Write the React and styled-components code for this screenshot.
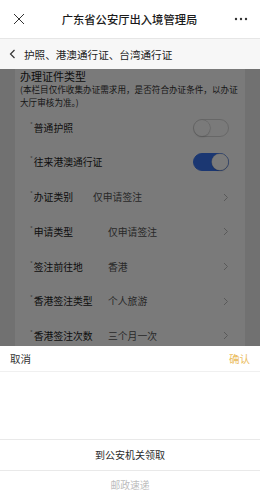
import React from 'react'
import styled, { createGlobalStyle } from 'styled-components'

const Global = createGlobalStyle`
  html, body { margin: 0; padding: 0; background: #fff; }
  body { font-family: "Noto Sans CJK SC", "Noto Sans", sans-serif; }
`

const Screen = styled.div`
  width: 260px;
  height: 500px;
  display: flex;
  flex-direction: column;
  overflow: hidden;
  background: #fff;
`

const TopBar = styled.div`
  height: 38px;
  flex: none;
  display: flex;
  align-items: center;
  justify-content: space-between;
  padding: 0 12px 0 13px;
  border-bottom: 1px solid #e6e6e6;
  background: #fff;
`

const Title = styled.div`
  font-size: 11.3px;
  font-weight: 500;
  color: #1a1a1a;
`

const NavBar = styled.div`
  height: 30px;
  flex: none;
  display: flex;
  align-items: center;
  gap: 8px;
  padding: 0 0 0 9px;
  background: #f7f7f7;
  font-size: 10.6px;
  color: #222;
`

const Body = styled.div`
  position: relative;
  flex: 1;
  overflow: hidden;
  background: #ececec;
`

const Section = styled.div`
  margin: 0 15px;
  background: #fff;
  padding: 0 0 20px;
`

const SectionHead = styled.div`
  padding: 1px 5px 0;
`

const SectionTitle = styled.div`
  font-size: 11px;
  line-height: 13px;
  color: #222;
`

const Note = styled.div`
  font-size: 8.6px;
  line-height: 12.7px;
  color: #333;
`

const List = styled.div`
  padding-top: 2px;
`

const Row = styled.div`
  height: 34.7px;
  display: flex;
  align-items: center;
  padding: 0 16px 0 15px;
  font-size: 9.8px;
`

const Label = styled.div`
  flex: none;
  width: ${p => (p.$tight ? 'auto' : '78px')};
  margin-right: ${p => (p.$tight ? '20px' : '0')};
  color: #222;
  display: flex;
  align-items: flex-start;
`

const Star = styled.span`
  font-size: 6px;
  line-height: 8px;
  color: #888;
  margin-right: 1px;
`

const Value = styled.div`
  flex: 1;
  color: #555;
`

const Switch = styled.div`
  width: 36px;
  height: 18px;
  box-sizing: border-box;
  border-radius: 9px;
  border: 1px solid ${p => (p.$on ? '#3a74ee' : '#d8d8d8')};
  background: ${p => (p.$on ? '#3a74ee' : '#fff')};
  display: flex;
  justify-content: ${p => (p.$on ? 'flex-end' : 'flex-start')};
  align-items: center;
`

const Knob = styled.div`
  width: 16px;
  height: 16px;
  border-radius: 50%;
  background: #fff;
  box-shadow: 0 0 0 0.5px #ccc, 0 1px 2px rgba(0, 0, 0, 0.2);
`

const Dim = styled.div`
  position: absolute;
  inset: 0;
  background: rgba(0, 0, 0, 0.52);
`

const Sheet = styled.div`
  position: absolute;
  left: 0;
  right: 0;
  bottom: 0;
  height: 154px;
  background: #fff;
  display: flex;
  flex-direction: column;
`

const SheetBar = styled.div`
  height: 29px;
  display: flex;
  align-items: center;
  justify-content: space-between;
  padding: 0 10px;
  border-bottom: 1px solid #f0f0f0;
  font-size: 10.5px;
`

const SheetBtn = styled.span`
  color: ${p => (p.$accent ? '#ebbd5f' : '#333')};
`

const Picker = styled.div`
  flex: 1;
  padding-top: 67px;
`

const Option = styled.div`
  height: 29.5px;
  display: flex;
  align-items: center;
  justify-content: center;
  font-size: ${p => (p.$active ? '10px' : '9.8px')};
  color: ${p => (p.$active ? '#2a2a2a' : '#bdbdbd')};
  border-top: ${p => (p.$active ? '1px solid #e9e9e9' : 'none')};
  border-bottom: ${p => (p.$active ? '1px solid #e9e9e9' : 'none')};
`

const Chevron = () => (
  <svg width="6" height="9" viewBox="0 0 6 9" fill="none">
    <path d="M1 1l3.5 3.5L1 8" stroke="#bbb" strokeWidth="1" />
  </svg>
)

const rows = [
  { label: '办证类别', value: '仅申请签注', tight: true },
  { label: '申请类型', value: '仅申请签注' },
  { label: '签注前往地', value: '香港' },
  { label: '香港签注类型', value: '个人旅游' },
  { label: '香港签注次数', value: '三个月一次' },
]

export default function App() {
  return (
    <Screen>
      <Global />
      <TopBar>
        <svg width="12" height="12" viewBox="0 0 12 12">
          <path d="M1 1l10 10M11 1L1 11" stroke="#333" strokeWidth="1" />
        </svg>
        <Title>广东省公安厅出入境管理局</Title>
        <svg width="14" height="4" viewBox="0 0 14 4">
          <circle cx="2" cy="2" r="1.2" fill="#333" />
          <circle cx="7" cy="2" r="1.2" fill="#333" />
          <circle cx="12" cy="2" r="1.2" fill="#333" />
        </svg>
      </TopBar>
      <NavBar>
        <svg width="7" height="10" viewBox="0 0 7 10" fill="none">
          <path d="M5.5 1L1.5 5l4 4" stroke="#333" strokeWidth="1.2" />
        </svg>
        护照、港澳通行证、台湾通行证
      </NavBar>
      <Body>
        <Section>
          <SectionHead>
            <SectionTitle>办理证件类型</SectionTitle>
            <Note>(本栏目仅作收集办证需求用，是否符合办证条件，以办证大厅审核为准。)</Note>
          </SectionHead>
          <List>
            <Row>
              <Label><Star>*</Star>普通护照</Label>
              <Value />
              <Switch><Knob /></Switch>
            </Row>
            <Row>
              <Label $tight><Star>*</Star>往来港澳通行证</Label>
              <Value />
              <Switch $on><Knob /></Switch>
            </Row>
            {rows.map(r => (
              <Row key={r.label}>
                <Label $tight={r.tight}><Star>*</Star>{r.label}</Label>
                <Value>{r.value}</Value>
                <Chevron />
              </Row>
            ))}
          </List>
        </Section>
        <Dim />
        <Sheet>
          <SheetBar>
            <SheetBtn>取消</SheetBtn>
            <SheetBtn $accent>确认</SheetBtn>
          </SheetBar>
          <Picker>
            <Option $active>到公安机关领取</Option>
            <Option>邮政速递</Option>
          </Picker>
        </Sheet>
      </Body>
    </Screen>
  )
}
